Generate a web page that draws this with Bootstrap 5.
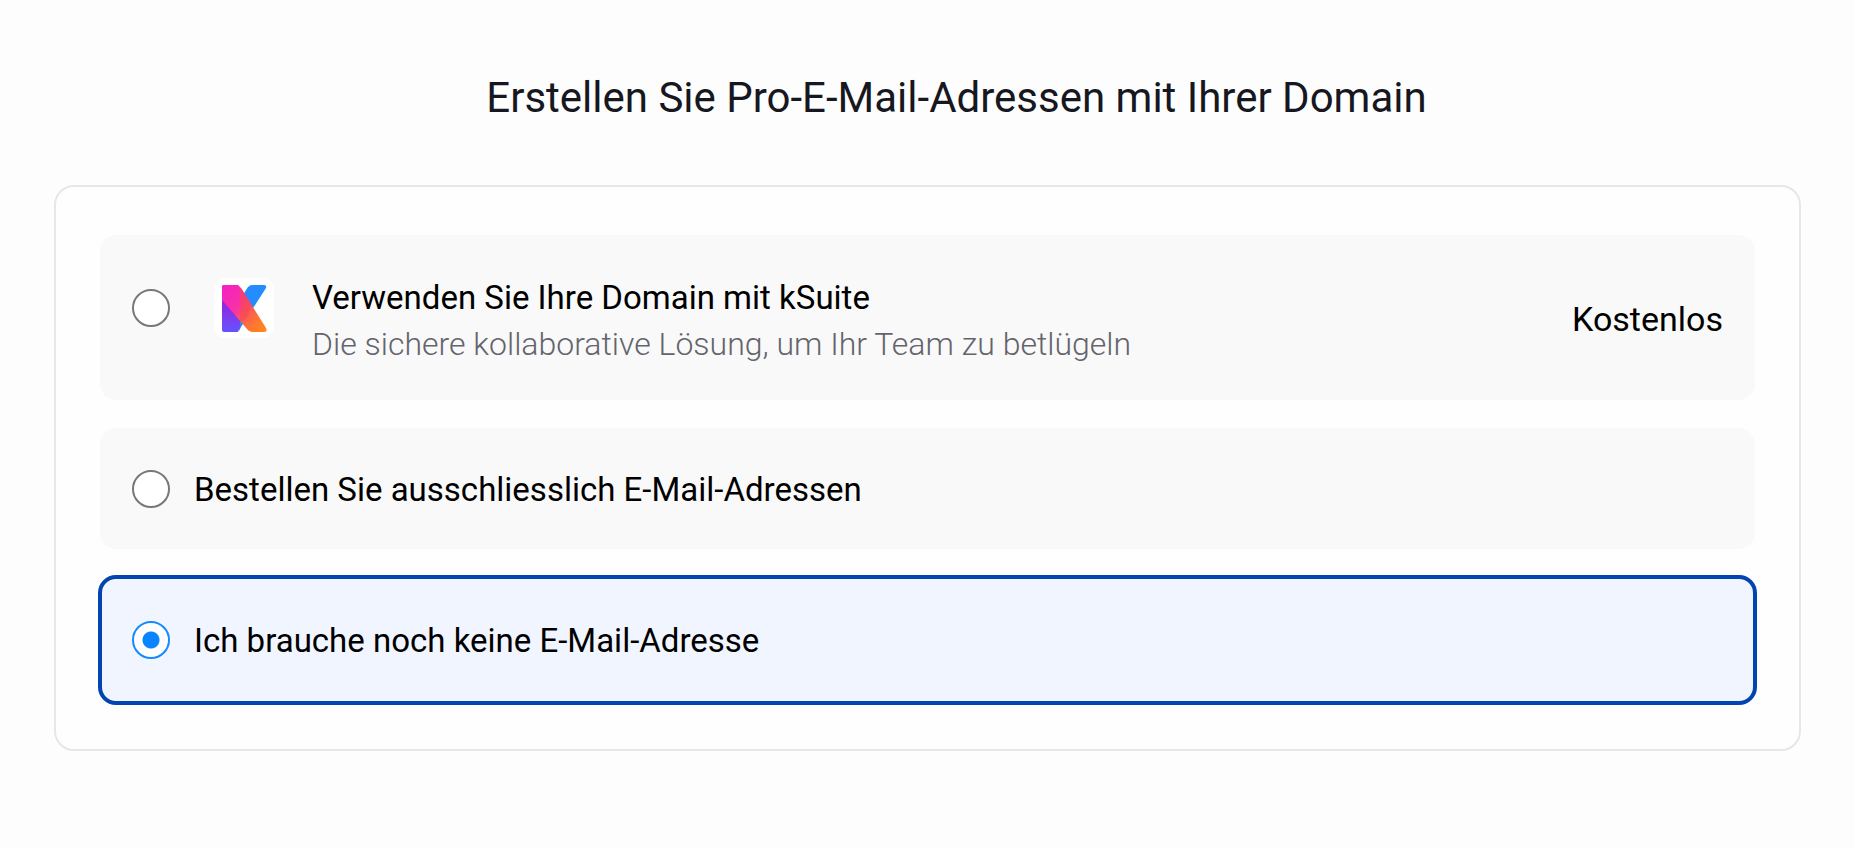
<!DOCTYPE html>
<html lang="de">
<head>
<meta charset="utf-8">
<meta name="viewport" content="width=device-width, initial-scale=1">
<title>Pro-E-Mail-Adressen</title>
<link href="https://cdn.jsdelivr.net/npm/bootstrap@5.3.0/dist/css/bootstrap.min.css" rel="stylesheet">
<style>
  body { background: #fdfdfd; color: #000; font-family: Roboto, "Liberation Sans", sans-serif; }
  .page { padding: 72px 53px 48px 54px; }
  .page-title { font-size: 42px; line-height: 52px; font-weight: 400; color: #16171f; padding-left: 58px; margin-bottom: 61px; }
  .panel { border: 2px solid #e7e7e8; border-radius: 20px; padding: 46px 42px 44px; background: #fefefe; }
  .options { gap: 24px; }
  .option { border: 2px solid transparent; border-radius: 18px; background: #f9f9f9 padding-box; padding: 0 32px 0 30px; min-height: 125px; cursor: pointer; font-size: 33px; line-height: 46px; }
  .option-tall { min-height: 169px; }
  .option-tall .option-mark { margin-bottom: 20px; }
  .option-tall .option-text { padding-top: 6px; }
  .option:has(:checked) { border: 4px solid #0045b0; background: #f1f5ff; min-height: 130px; padding-left: 28px; }
  .option .form-check-input { width: 38px; height: 38px; margin: 0 24px 0 2px; border: 2px solid #77777c; background-color: #fff; }
  .option .form-check-input:checked { border-color: #148aff; background-color: #fff; background-image: radial-gradient(circle, #0b84ff 8px, #fff 9px); }
  .option-text { padding-top: 2px; }
  .option-price { font-size: 34px; padding-top: 2px; }
  .logo-tile { width: 60px; height: 60px; border-radius: 12px; background: #fff; margin-left: 20px; margin-right: 38px; }
  .option-sub { color: #64646c; font-size: 32px; font-weight: 300; }
</style>
</head>
<body>
<main class="page">
  <h1 class="page-title text-center">Erstellen Sie Pro-E-Mail-Adressen mit Ihrer Domain</h1>
  <form class="panel">
    <div class="options d-flex flex-column">
      <label class="option option-tall d-flex align-items-center" for="opt-ksuite">
        <span class="option-mark d-flex align-items-center flex-shrink-0">
        <input class="form-check-input flex-shrink-0" type="radio" name="mail" id="opt-ksuite">
        <span class="logo-tile d-flex align-items-center justify-content-center flex-shrink-0">
          <svg width="46" height="48" viewBox="0 0 46 48" aria-hidden="true">
            <defs>
              <linearGradient id="kStem" x1="0" y1="0" x2="0" y2="1"><stop offset="0" stop-color="#8a25d8"/><stop offset=".5" stop-color="#8a2ee6"/><stop offset="1" stop-color="#6652ff"/></linearGradient>
              <linearGradient id="kArm" x1="0" y1="0" x2="1" y2="1"><stop offset="0" stop-color="#f51fc4"/><stop offset=".42" stop-color="#f832a4"/><stop offset=".58" stop-color="#fa5a58"/><stop offset=".8" stop-color="#ff7a2a"/><stop offset="1" stop-color="#ff8a1c"/></linearGradient>
            </defs>
            <path d="M27 3Q29 1 31 1H43Q46 1 45 4L20 43L18 47V17Z" fill="#238cff"/>
            <path d="M3 1H17L19 4V43L17 48H3Q1 48 1 46V3Q1 1 3 1Z" fill="url(#kStem)"/>
            <path d="M3 1H15Q18 1 20 4L45 44Q47 48 43 48H31Q28 48 26 45L1 16V3Q1 1 3 1Z" fill="url(#kArm)"/>
            <path d="M19 4V37L20 38Q28 35 29 25L31 21L20 4Z" fill="#f7474f" opacity=".6"/>
          </svg>
        </span>
        </span>
        <span class="option-text flex-grow-1">
          <span class="d-block">Verwenden Sie Ihre Domain mit kSuite</span>
          <span class="option-sub d-block">Die sichere kollaborative Lösung, um Ihr Team zu betlügeln</span>
        </span>
        <span class="option-price">Kostenlos</span>
      </label>
      <label class="option d-flex align-items-center" for="opt-mail">
        <input class="form-check-input flex-shrink-0" type="radio" name="mail" id="opt-mail">
        <span class="option-text">Bestellen Sie ausschliesslich E-Mail-Adressen</span>
      </label>
      <label class="option d-flex align-items-center" for="opt-none">
        <input class="form-check-input flex-shrink-0" type="radio" name="mail" id="opt-none" checked>
        <span class="option-text">Ich brauche noch keine E-Mail-Adresse</span>
      </label>
    </div>
  </form>
</main>
<script src="https://cdn.jsdelivr.net/npm/bootstrap@5.3.0/dist/js/bootstrap.bundle.min.js"></script>
</body>
</html>
